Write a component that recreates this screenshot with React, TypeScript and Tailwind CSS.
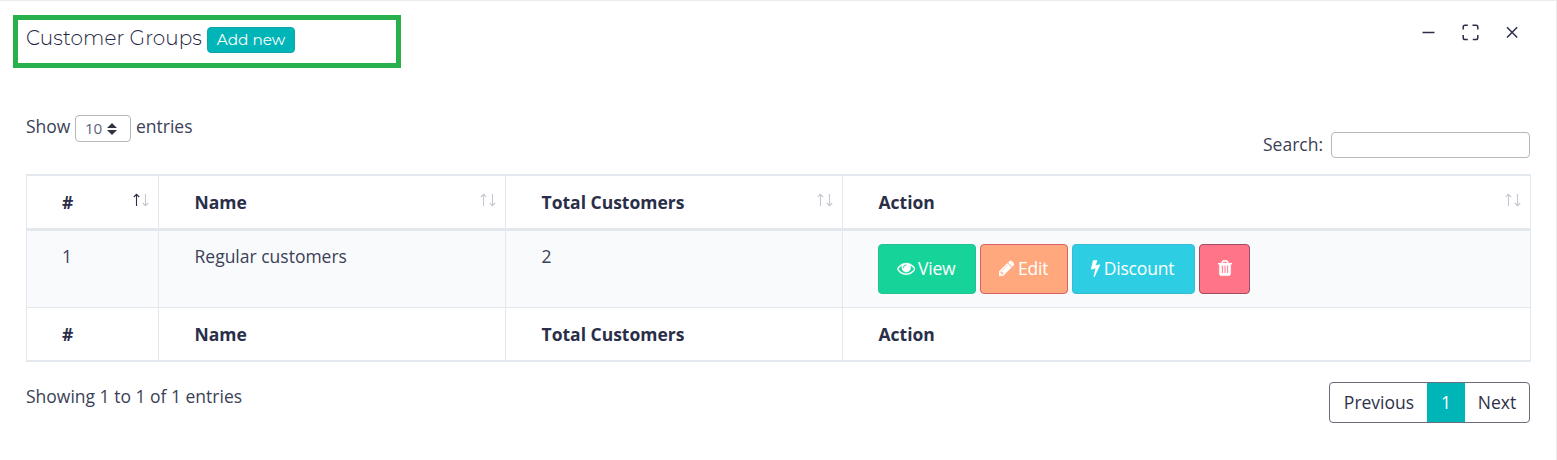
import React from "react";

const EYE =
  "M1664 960q-152-236-381-353 61 104 61 225 0 185-131.5 316.5t-316.5 131.5-316.5-131.5-131.5-316.5q0-121 61-225-229 117-381 353 133 205 333.5 326.5t434.5 121.5 434.5-121.5 333.5-326.5zm-720-384q0-20-14-34t-34-14q-125 0-214.5 89.5t-89.5 214.5q0 20 14 34t34 14 34-14 14-34q0-86 61-147t147-61q20 0 34-14t14-34zm848 384q0 34-20 69-140 230-376.5 368.5t-499.5 138.5-499.5-139-376.5-368q-20-35-20-69t20-69q140-229 376.5-368t499.5-139 499.5 139 376.5 368q20 35 20 69z";
const PENCIL =
  "M491 1536l91-91-235-235-91 91v107h128v128h107zm523-928q0-22-22-22-10 0-17 7l-542 542q-7 7-7 17 0 22 22 22 10 0 17-7l542-542q7-7 7-17zm-54-192l416 416-832 832h-416v-416zm683 96q0 53-37 90l-166 166-416-416 166-165q36-38 90-38 53 0 91 38l235 234q37 39 37 91z";
const BOLT =
  "M1333 566q18 20 7 44l-540 1157q-13 25-42 25-4 0-14-2-17-5-25.5-19t-4.5-30l197-808-406 101q-4 1-12 1-18 0-31-11-18-15-13-39l201-825q4-14 16-23t28-9h328q19 0 32 12.5t13 29.5q0 8-5 18l-171 463 396-98q8-2 12-2 19 0 34 15z";
const TRASH =
  "M704 1376v-704q0-14-9-23t-23-9h-64q-14 0-23 9t-9 23v704q0 14 9 23t23 9h64q14 0 23-9t9-23zm256 0v-704q0-14-9-23t-23-9h-64q-14 0-23 9t-9 23v704q0 14 9 23t23 9h64q14 0 23-9t9-23zm256 0v-704q0-14-9-23t-23-9h-64q-14 0-23 9t-9 23v704q0 14 9 23t23 9h64q14 0 23-9t9-23zm-544-992h448l-48-117q-7-9-17-11h-317q-10 2-17 11zm928 32v64q0 14-9 23t-23 9h-96v948q0 83-47 143.5t-113 60.5h-832q-66 0-113-58.5t-47-141.5v-952h-96q-14 0-23-9t-9-23v-64q0-14 9-23t23-9h309l70-167q15-37 54-63t79-26h320q40 0 79 26t54 63l70 167h309q14 0 23 9t9 23z";

function Glyph({ d, viewBox, className }: { d: string; viewBox: string; className: string }) {
  return (
    <svg
      viewBox={viewBox}
      className={`shrink-0 ${className}`}
      fill="currentColor"
      stroke="currentColor"
      strokeWidth="24"
      aria-hidden="true"
    >
      <path d={d} />
    </svg>
  );
}

function SortArrows({ ascending = false }: { ascending?: boolean }) {
  return (
    <svg viewBox="0 0 16 14" className="mr-[9px] mb-1 h-[14px] w-4 shrink-0" fill="none" strokeWidth="1.1">
      <path d="M3.5 13V1.5M0.8 4L3.5 1.3L6.2 4" stroke={ascending ? "#2a2e48" : "#c6c7cf"} />
      <path d="M12.5 1V12.5M9.8 10L12.5 12.7L15.2 10" stroke="#c6c7cf" />
    </svg>
  );
}

const COLUMNS = ["#", "Name", "Total Customers", "Action"];
const GRID = "grid grid-cols-[132px_347px_337px_688px] border-l border-[#e3e8ee]";
const CELL = "flex border-r border-[#e3e8ee] pl-[35.5px] first:pl-[35px]";
const BUTTON = "flex h-[50px] items-center justify-center rounded-[4px] border pb-[2px] text-white tracking-[-0.2px]";

export default function App() {
  return (
    <div className="h-[460px] w-[1557px] overflow-hidden border-t border-r border-[#ebebeb] bg-white font-['Open_Sans',sans-serif] text-[17.5px] leading-[26px] text-[#3b3f57]">
      <header className="flex h-[83px] items-start justify-between pt-[14px] pr-[35.5px] pl-[13px]">
        <div className="flex h-[53px] w-[388px] items-start border-[5px] border-[#27b04b] pt-[5px] pl-2">
          <h4 className="w-[181px] font-['Montserrat','Inter',sans-serif] text-[20px] leading-[27px] font-light tracking-[0.08px] whitespace-nowrap text-[#22263e]">
            Customer Groups
          </h4>
          <button className="mt-[2px] flex h-[26px] w-[88px] items-center justify-center rounded-[4px] border border-[#12a5a7] bg-[#00b5b8] font-['Montserrat','Inter',sans-serif] text-[15.3px] whitespace-nowrap text-white">
            Add new
          </button>
        </div>
        <div className="flex pt-[9px] text-[#2a2e48]">
          <svg viewBox="0 0 100 18" className="h-[18px] w-[100px]" fill="none" stroke="currentColor" strokeWidth="1.5">
            <path d="M1.5 8.5H13.5" />
            <path d="M46.8 1.2H44Q42.2 1.2 42.2 3V5.6M51.5 1.2H55Q56.8 1.2 56.8 3V5.6M42.2 11V13.8Q42.2 15.6 44 15.6H46.8M56.8 11V13.8Q56.8 15.6 55 15.6H51.8" />
            <path d="M86 3.3L96.2 13.5M96.2 3.3L86 13.5" />
          </svg>
        </div>
      </header>

      <div className="flex justify-between pr-[26px] pl-[26px]">
        <div className="flex h-[90px] items-start pt-[29px]">
          <span className="w-[49px]">Show</span>
          <div className="mt-[2px] flex h-[27px] w-[56px] items-center rounded-[4px] border border-[#b4b8bf] pb-[2px] pl-[9px] text-[15.3px] tracking-[-0.2px] text-[#60647a]">
            <span>10</span>
            <svg viewBox="0 0 10 12" className="mt-[2px] ml-[5px] h-[12px] w-[10px]" fill="#303440">
              <path d="M0 5L5 0L10 5ZM0 7H10L5 12Z" />
            </svg>
          </div>
          <span className="ml-[5px]">entries</span>
        </div>
        <label className="flex h-[90px] items-start pt-[47px]">
          <span>Search:</span>
          <input className="mt-[1px] ml-2 h-[26px] w-[199px] rounded-[4px] border border-[#b4b8bf] bg-white" />
        </label>
      </div>

      <div className="ml-[26px] w-[1505px] border-y-2 border-[#e3e8ee]">
        <div className={`${GRID} h-[55px] border-b-[3px]`}>
          {COLUMNS.map((name, i) => (
            <div key={name} className={`${CELL} items-center justify-between font-bold text-[#2a2e48]`}>
              <span>{name}</span>
              <SortArrows ascending={i === 0} />
            </div>
          ))}
        </div>
        <div className={`${GRID} h-[77px] border-b bg-[#f9fafc]`}>
          <div className={`${CELL} pt-3`}>1</div>
          <div className={`${CELL} pt-3`}>Regular customers</div>
          <div className={`${CELL} pt-3`}>2</div>
          <div className="flex gap-1 border-r border-[#e3e8ee] pt-[13px] pl-[35px]">
            <button className={`${BUTTON} w-[98px] gap-[3px] border-[#25c291] bg-[#16d39a] pr-[2px]`}>
              <Glyph d={EYE} viewBox="0 0 1792 1792" className="h-[18.5px] w-[18.5px]" />
              View
            </button>
            <button className={`${BUTTON} w-[88px] gap-1 border-[#dc6068] bg-[#ffa87d] pr-px`}>
              <Glyph d={PENCIL} viewBox="128 0 1536 1792" className="h-[18px] w-[15.5px]" />
              Edit
            </button>
            <button className={`${BUTTON} w-[123px] gap-1 border-[#37bbd3] bg-[#2dcee3] pr-[2px]`}>
              <Glyph d={BOLT} viewBox="448 0 896 1792" className="h-[18px] w-[9px]" />
              Discount
            </button>
            <button className={`${BUTTON} w-[51px] border-[#a34a65] bg-[#ff7588]`} aria-label="Delete">
              <Glyph d={TRASH} viewBox="192 0 1408 1792" className="h-[18px] w-[14px]" />
            </button>
          </div>
        </div>
        <div className={`${GRID} h-[52px]`}>
          {COLUMNS.map((name) => (
            <div key={name} className={`${CELL} items-center font-bold text-[#2a2e48]`}>
              {name}
            </div>
          ))}
        </div>
      </div>

      <footer className="flex items-start justify-between pr-[26px] pl-[26px]">
        <p className="pt-[21px]">Showing 1 to 1 of 1 entries</p>
        <nav className="mt-5 flex h-[41px] w-[201px] overflow-hidden rounded-[4px] border border-[#686c7c] text-[#2e3249]">
          <button className="w-[97px] pb-[2px] pl-px">Previous</button>
          <button className="-my-px w-[38px] bg-[#00b5b8] pb-[2px] text-white">1</button>
          <button className="flex-1 pb-[2px]">Next</button>
        </nav>
      </footer>
    </div>
  );
}
